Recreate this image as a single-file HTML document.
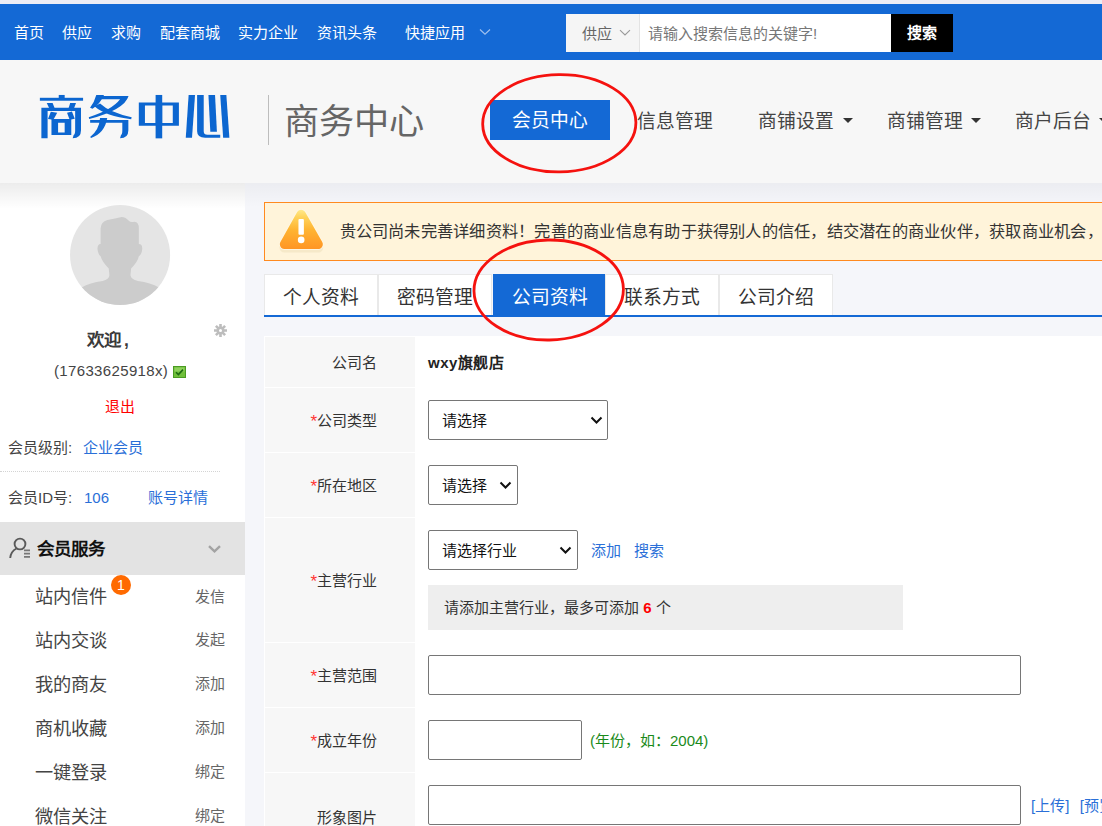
<!DOCTYPE html>
<html lang="zh-CN">
<head>
<meta charset="utf-8">
<title>商务中心</title>
<style>
*{box-sizing:border-box;margin:0;padding:0}
html,body{width:1102px;height:826px;overflow:hidden}
body{position:relative;background:#f5f6fa;font-family:"Liberation Sans",sans-serif;font-size:15px;color:#333;line-height:1}
.a{position:absolute;white-space:nowrap}
a{text-decoration:none;color:inherit}
/* top bar */
#strip{left:0;top:0;width:1102px;height:4px;background:#ecedf5}
#top{left:0;top:4px;width:1102px;height:56px;background:#1469d5}
.tn{top:25px;height:15px;line-height:15px;font-size:15px;color:#fff}
#sbox{left:566px;top:14px;width:387px;height:38px;background:#fff}
#ssel{left:566px;top:14px;width:74px;height:38px;background:#f5f5f5;border-right:1px solid #e3e3e3}
#sbtn{left:891px;top:14px;width:62px;height:38px;background:#000;color:#fff;font-weight:bold;text-align:center;line-height:38px;font-size:15px}
/* header */
#hdr{left:0;top:60px;width:1102px;height:123px;background:#f7f7f7}
#shadow{left:245px;top:183px;width:857px;height:24px;background:linear-gradient(to bottom,rgba(0,0,20,.04),rgba(0,0,20,0))}
#logo{left:39px;top:93px;height:46px;line-height:46px;font-size:47px;font-weight:900;color:#0e66d0;letter-spacing:0px}
#vline{left:268px;top:95px;width:1px;height:50px;background:#bdbdbd}
#title{left:283.6px;top:104px;height:35px;line-height:35px;font-size:35.2px;color:#666}
#navbtn{left:490px;top:100px;width:120px;height:40px;background:#1469d5;color:#fff;text-align:center;line-height:42.5px;font-size:18.75px}
.nv{top:112px;height:19px;line-height:19px;font-size:18.75px;color:#444}
.caret{width:0;height:0;border-left:5px solid transparent;border-right:5px solid transparent;border-top:5.5px solid #333;top:118px}
/* sidebar */
#side{left:0;top:183px;width:245px;height:643px;background:#fff}
#sideshadow{left:0;top:183px;width:245px;height:26px;background:linear-gradient(to bottom,rgba(0,0,0,.075),rgba(0,0,0,0))}
.blue{color:#2a6fd8}
.mi{left:35px;font-size:18.2px;height:18px;line-height:19px;color:#444}
.mr{left:195px;font-size:15px;height:15px;line-height:15px;color:#666}
/* main */
#alert{left:264px;top:202px;width:860px;height:59px;background:#fff4da;border:1.25px solid #ff8a1f}
#alerttxt{left:339.5px;top:223.3px;letter-spacing:.24px;font-size:16.25px;height:17px;line-height:17px;color:#333}
.tab{top:274px;height:41px;width:114px;background:#fff;border:1px solid #e9e9e9;border-bottom:none;text-align:center;line-height:46px;font-size:18.75px;color:#333}
#tabline{left:264px;top:314.6px;width:840px;height:2.5px;background:#1469d5}
#form{left:264px;top:336px;width:840px;height:490px;background:#fff}
.lc{left:265.25px;width:149.75px;background:#f7f7f7}
.lb{left:264px;width:113px;text-align:right;font-size:15px;height:15px;line-height:15px;color:#333}
.lb i{color:#f33;font-style:normal;font-size:17px;line-height:15px;vertical-align:-1px}
.inp{background:#fff;border:1px solid #767676;border-radius:2px}
.seltxt{font-size:15px;height:15px;line-height:15px;color:#111}
</style>
</head>
<body>
<div class="a" id="strip"></div>
<div class="a" id="top"></div>
<div class="a" id="hdr"></div>
<div class="a" id="shadow"></div>
<div class="a" id="side"></div>
<div class="a" id="sideshadow"></div>

<div class="a tn" style="left:14px">首页</div>
<div class="a tn" style="left:62px">供应</div>
<div class="a tn" style="left:111px">求购</div>
<div class="a tn" style="left:160px">配套商城</div>
<div class="a tn" style="left:238px">实力企业</div>
<div class="a tn" style="left:317px">资讯头条</div>
<div class="a tn" style="left:405px">快捷应用</div>
<svg class="a" style="left:479px;top:28px" width="12" height="8" viewBox="0 0 12 8"><path d="M1 1.5 L6 6.2 L11 1.5" fill="none" stroke="#9fc0ee" stroke-width="1.2"/></svg>
<div class="a" id="sbox"></div>
<div class="a" id="ssel"></div>
<div class="a" style="left:582px;top:26px;font-size:15px;height:15px;line-height:15px;color:#666">供应</div>
<svg class="a" style="left:619px;top:29px" width="12" height="8" viewBox="0 0 12 8"><path d="M1 1.2 L6 6 L11 1.2" fill="none" stroke="#999" stroke-width="1.1"/></svg>
<div class="a" style="left:648px;top:26px;font-size:15px;height:15px;line-height:15px;color:#777">请输入搜索信息的关键字!</div>
<div class="a" id="sbtn">搜索</div>


<svg class="a" style="left:34px;top:86px" width="104" height="60" viewBox="0 0 1102 636"><g fill="#0c66d0">
<rect x="262" y="95" width="63" height="40"/>
<rect x="62" y="125" width="458" height="31"/>
<path d="M135 180 L197 180 L218 232 L160 232 Z"/>
<path d="M383 180 L445 180 L425 232 L367 232 Z"/>
<path d="M78 230 L498 230 L498 470 Q498 555 410 555 L420 520 Q436 515 436 470 L436 264 L144 264 L144 555 L78 555 Z"/>
<path d="M178 272 L246 284 L205 358 L148 350 Z"/>
<path d="M350 284 L402 270 L432 348 L378 358 Z"/>
<path d="M185 350 L395 350 L395 520 L185 520 Z M255 390 L255 494 L325 494 L325 390 Z" fill-rule="evenodd"/>
<path d="M660 95 L742 95 Q700 190 620 242 L594 230 Q640 170 660 95 Z"/>
<path d="M700 105 L1002 105 Q960 250 585 350 L580 330 Q830 250 912 140 L700 140 Z"/>
<path d="M640 215 L700 185 Q800 280 1035 330 L1030 352 Q760 320 640 215 Z"/>
<path d="M595 360 L1000 360 L1000 470 Q1000 555 912 555 L922 520 Q936 515 936 470 L936 390 L595 390 Z"/>
<path d="M700 340 L776 340 Q750 500 605 552 L595 540 Q690 470 700 340 Z"/>
</g></svg>
<svg class="a" style="left:132px;top:86px" width="104" height="60" viewBox="0 0 1102 636"><g fill="#0c66d0">
<rect x="250" y="95" width="70" height="460"/>
<path d="M72 175 L497 175 L497 421 L72 421 Z M137 206 L137 392 L250 392 L250 206 Z M320 206 L320 392 L432 392 L432 206 Z" fill-rule="evenodd"/>
<path d="M600 95 L668 95 L636 548 L570 548 Z"/>
<path d="M690 95 L760 95 L760 480 Q760 518 800 518 L935 518 L935 548 L775 548 Q690 548 690 480 Z"/>
<path d="M810 95 L880 95 L900 485 L830 485 Z"/>
<path d="M935 95 L1000 95 L1032 548 L966 548 Z"/>
</g></svg>
<div class="a" id="vline"></div>
<div class="a" id="title">商务中心</div>
<div class="a" id="navbtn">会员中心</div>
<div class="a nv" style="left:637px">信息管理</div>
<div class="a nv" style="left:758px">商铺设置</div><div class="a caret" style="left:843px"></div>
<div class="a nv" style="left:887px">商铺管理</div><div class="a caret" style="left:971px"></div>
<div class="a nv" style="left:1015px">商户后台</div><div class="a caret" style="left:1099px"></div>
<svg class="a" style="left:470px;top:62px" width="180" height="122" viewBox="0 0 180 122"><ellipse cx="89.3" cy="61.3" rx="76.6" ry="48.6" fill="none" stroke="#f5120f" stroke-width="2.8" transform="rotate(-0.8 89.3 61.3)"/></svg>


<svg class="a" style="left:64px;top:198px" width="112" height="112" viewBox="0 0 826 826">
<defs><clipPath id="cp"><circle cx="413.5" cy="420" r="369"/></clipPath></defs>
<circle cx="413.5" cy="420" r="369" fill="#e5e5e5"/>
<g clip-path="url(#cp)"><path fill="#cccccc" d="M270 340 L270 225 Q272 175 320 162 Q380 150 425 140 Q455 140 478 168 Q490 182 520 175 Q552 175 552 225 L552 340 Q578 340 577 375 Q575 415 552 430 Q545 470 495 520 L490 570 Q495 600 545 612 Q640 625 700 660 L760 830 L70 830 L130 660 Q190 625 285 612 Q332 600 335 570 L330 520 Q280 470 270 430 Q250 415 247 375 Q247 340 270 340 Z"/></g></svg>
<div class="a" style="left:87px;top:331px;font-size:17.5px;font-weight:bold;height:18px;line-height:18px;color:#3a3a3a">欢迎<span style="margin-left:3px">,</span></div>
<svg class="a" style="left:213.5px;top:324px" width="13" height="13" viewBox="0 0 13 13"><g stroke="#bdbdbd" stroke-width="2.6"><path d="M6.5 0V13M0 6.5H13M1.9 1.9L11.1 11.1M1.9 11.1L11.1 1.9"/></g><circle cx="6.5" cy="6.5" r="3.9" fill="#bdbdbd"/><circle cx="6.5" cy="6.5" r="1.5" fill="#fff"/></svg>
<div class="a" style="left:54px;top:363px;font-size:15px;height:16px;line-height:16px;color:#444;letter-spacing:.35px">(17633625918x)</div>
<svg class="a" style="left:173px;top:366px" width="13" height="12" viewBox="0 0 13 12"><rect x=".5" y=".5" width="12" height="11" fill="#6fbf3a" stroke="#4a9a22"/><rect x="1.5" y="1.5" width="10" height="4" fill="#9bd86a" opacity=".7"/><path d="M3 6.2 L5.4 8.6 L10 3.6" fill="none" stroke="#1d6a10" stroke-width="1.6"/></svg>
<div class="a" style="left:105px;top:399px;font-size:15px;height:15px;line-height:15px;color:#f00">退出</div>
<div class="a" style="left:8px;top:440px;font-size:15px;height:15px;line-height:15px;color:#444">会员级别: <span class="blue" style="position:absolute;left:75px">企业会员</span></div>
<div class="a" style="left:0;top:471px;width:220px;height:0;border-top:1px dotted #d4d4d4"></div>
<div class="a" style="left:8px;top:490px;font-size:15px;height:15px;line-height:15px;color:#444">会员ID号: <span class="blue" style="position:absolute;left:76px">106</span><span class="blue" style="position:absolute;left:140px">账号详情</span></div>
<div class="a" style="left:0;top:522px;width:245px;height:53px;background:#e3e3e3"></div>
<svg class="a" style="left:9px;top:537px" width="23" height="22" viewBox="0 0 23 22"><circle cx="11" cy="7" r="5.4" fill="none" stroke="#5a5a5a" stroke-width="1.9"/><path d="M7.5 11.5 C3.5 13.5 1.6 17 1.2 21" fill="none" stroke="#5a5a5a" stroke-width="1.9"/><path d="M15 13.4H21M15 16.6H21M15 19.8H21" stroke="#777" stroke-width="1.8"/></svg>
<div class="a" style="left:37px;top:540px;font-size:17.5px;font-weight:bold;height:18px;line-height:18px;color:#111">会员服务</div>
<svg class="a" style="left:207px;top:544px" width="15" height="10" viewBox="0 0 15 10"><path d="M2 2.2 L7.5 7.4 L13 2.2" fill="none" stroke="#a3a3a3" stroke-width="2.4"/></svg>
<div class="a mi" style="top:588px">站内信件</div><div class="a mr" style="top:589px">发信</div>
<div class="a" style="left:111px;top:575px;width:20px;height:20px;border-radius:10px;background:#ff6a00;color:#fff;font-size:14px;text-align:center;line-height:20px">1</div>
<div class="a mi" style="top:632px">站内交谈</div><div class="a mr" style="top:632px">发起</div>
<div class="a mi" style="top:676px">我的商友</div><div class="a mr" style="top:676px">添加</div>
<div class="a mi" style="top:720px">商机收藏</div><div class="a mr" style="top:720px">添加</div>
<div class="a mi" style="top:764px">一键登录</div><div class="a mr" style="top:764px">绑定</div>
<div class="a mi" style="top:808px">微信关注</div><div class="a mr" style="top:808px">绑定</div>


<div class="a" id="alert"></div>
<svg class="a" style="left:270px;top:203px" width="66" height="56" viewBox="0 0 974 826">
<defs><linearGradient id="wg" x1="0" y1="100" x2="0" y2="680" gradientUnits="userSpaceOnUse"><stop offset="0" stop-color="#ffe98a"/><stop offset=".18" stop-color="#ffd45c"/><stop offset=".5" stop-color="#ffb432"/><stop offset="1" stop-color="#ff9524"/></linearGradient></defs>
<path d="M460 170 L710 612 L215 612 Z" fill="#f3e6c4" stroke="#f3e6c4" stroke-width="150" stroke-linejoin="round" transform="translate(0,45)" opacity=".75"/>
<path d="M460 170 L710 610 L215 610 Z" fill="#fff6e0" stroke="#fff8e6" stroke-width="165" stroke-linejoin="round" opacity=".8"/>
<path d="M460 170 L710 610 L215 610 Z" fill="url(#wg)" stroke="url(#wg)" stroke-width="140" stroke-linejoin="round"/>
<rect x="420" y="235" width="80" height="234" rx="14" fill="#fff"/><circle cx="460" cy="545" r="49" fill="#fff"/>
</svg>
<div class="a" id="alerttxt">贵公司尚未完善详细资料！完善的商业信息有助于获得别人的信任，结交潜在的商业伙伴，获取商业机会，</div>
<div class="a tab" style="left:264px">个人资料</div>
<div class="a tab" style="left:377.75px">密码管理</div>
<div class="a tab" style="left:492.5px;background:#1469d5;color:#fff;border-color:#1469d5">公司资料</div>
<div class="a tab" style="left:605.25px">联系方式</div>
<div class="a tab" style="left:719px">公司介绍</div>
<div class="a" id="tabline"></div>
<div class="a" id="form"></div>
<div class="a lc" style="top:337.25px;height:49.9px"></div>
<div class="a lc" style="top:388px;height:64.2px"></div>
<div class="a lc" style="top:453px;height:64.2px"></div>
<div class="a lc" style="top:518px;height:124.2px"></div>
<div class="a lc" style="top:643px;height:64.2px"></div>
<div class="a lc" style="top:708px;height:64.2px"></div>
<div class="a lc" style="top:773px;height:64px"></div>
<div class="a lb" style="top:355px">公司名</div>
<div class="a lb" style="top:413px"><i>*</i>公司类型</div>
<div class="a lb" style="top:478px"><i>*</i>所在地区</div>
<div class="a lb" style="top:573px"><i>*</i>主营行业</div>
<div class="a lb" style="top:668px"><i>*</i>主营范围</div>
<div class="a lb" style="top:733px"><i>*</i>成立年份</div>
<div class="a lb" style="top:810px">形象图片</div>
<div class="a" style="left:428px;top:355px;font-size:15px;font-weight:bold;height:15px;line-height:15px;color:#222;letter-spacing:.5px">wxy旗舰店</div>
<div class="a inp" style="left:428px;top:400px;width:180px;height:40px"></div>
<div class="a seltxt" style="left:442px;top:413px">请选择</div>
<svg class="a" style="left:590px;top:416px" width="13" height="9" viewBox="0 0 13 9"><path d="M1.5 1.5 L6.5 6.5 L11.5 1.5" fill="none" stroke="#111" stroke-width="2"/></svg>
<div class="a inp" style="left:428px;top:465px;width:90px;height:40px"></div>
<div class="a seltxt" style="left:442px;top:478px">请选择</div>
<svg class="a" style="left:499px;top:481px" width="13" height="9" viewBox="0 0 13 9"><path d="M1.5 1.5 L6.5 6.5 L11.5 1.5" fill="none" stroke="#111" stroke-width="2"/></svg>
<div class="a inp" style="left:428px;top:530px;width:150px;height:40px"></div>
<div class="a seltxt" style="left:442px;top:543px">请选择行业</div>
<svg class="a" style="left:559px;top:546px" width="13" height="9" viewBox="0 0 13 9"><path d="M1.5 1.5 L6.5 6.5 L11.5 1.5" fill="none" stroke="#111" stroke-width="2"/></svg>
<div class="a blue" style="left:591px;top:543px;font-size:15px;height:15px;line-height:15px">添加</div>
<div class="a blue" style="left:634px;top:543px;font-size:15px;height:15px;line-height:15px">搜索</div>
<div class="a" style="left:428px;top:585px;width:475px;height:45px;background:#eee"></div>
<div class="a" style="left:444px;top:600px;font-size:15px;height:15px;line-height:15px;color:#333">请添加主营行业，最多可添加 <b style="color:#f00">6</b> 个</div>
<div class="a inp" style="left:428px;top:655px;width:593px;height:40px"></div>
<div class="a inp" style="left:428px;top:720px;width:153.5px;height:40px"></div>
<div class="a" style="left:590px;top:733px;font-size:15px;height:15px;line-height:15px;color:#1a8a1a">(年份，如：2004)</div>
<div class="a inp" style="left:428px;top:785px;width:593px;height:40px"></div>
<div class="a blue" style="left:1031px;top:798px;font-size:15px;height:15px;line-height:15px">[上传]&nbsp; <span style="margin-left:2px">[预览]</span></div>
<svg class="a" style="left:462px;top:228px" width="180" height="124" viewBox="0 0 180 124"><ellipse cx="86.7" cy="62" rx="74.7" ry="50" fill="none" stroke="#f5120f" stroke-width="2.8" transform="rotate(-1 86.7 62)"/></svg>

</body>
</html>
